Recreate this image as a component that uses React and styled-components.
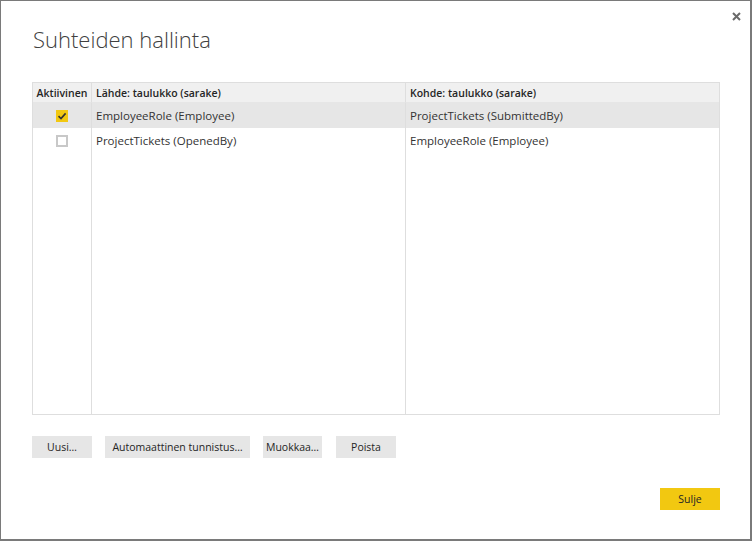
import React from "react";
import styled, { createGlobalStyle } from "styled-components";

const Global = createGlobalStyle`
  html, body { margin: 0; padding: 0; background: #ffffff; }
  body { font-family: "Open Sans", "Noto Sans", sans-serif; color: #333; }
  * { box-sizing: border-box; }
`;

const Dialog = styled.div`
  width: 752px;
  height: 541px;
  background: #fff;
  border-style: solid;
  border-color: #7a7a7a;
  border-width: 1px 2px 2px 1px;
  padding: 0 30px 0 31px;
  display: flex;
  flex-direction: column;
`;

const Header = styled.div`
  display: flex;
  justify-content: space-between;
  align-items: flex-start;
`;

const Title = styled.h1`
  margin: 22px 0 0 1px;
  font-size: 22px;
  font-weight: 300;
  line-height: 32px;
  color: #404040;
`;

const Close = styled.button`
  margin: 10px -21px 0 0;
  width: 10px;
  height: 10px;
  padding: 0;
  border: 0;
  background: none;
  display: flex;
  align-items: center;
  justify-content: center;
  cursor: pointer;
`;

const Table = styled.div`
  margin-top: 27px;
  height: 333px;
  border: 1px solid #dedede;
  display: grid;
  grid-template-columns: 58px 314px 1fr;
  grid-template-rows: 20px 25px 25px 1fr;
`;

const Cell = styled.div`
  display: flex;
  align-items: center;
  justify-content: ${(p) => (p.$center ? "center" : "flex-start")};
  padding: 0 ${(p) => (p.$center ? "0" : "4px")};
  border-left: ${(p) => (p.$first ? "0" : "1px solid #dedede")};
  background: ${(p) => p.$bg || "transparent"};
  font-size: 11.5px;
  color: #333;
  white-space: nowrap;
`;

const HeadCell = styled(Cell)`
  font-weight: 600;
  font-size: 10.5px;
  background: #f0f0f0;
  border-bottom: 1px solid #e6e6e6;
  color: #252525;
`;

const Check = styled.span`
  width: 12px;
  height: 12px;
  display: flex;
  align-items: center;
  justify-content: center;
  background: ${(p) => (p.$checked ? "#f2c811" : "#fff")};
  border: ${(p) => (p.$checked ? "0" : "2px solid #c8c8c8")};
`;

const ButtonRow = styled.div`
  margin-top: 21px;
  display: flex;
  gap: 13px;
`;

const Button = styled.button`
  width: ${(p) => p.$w}px;
  height: 22px;
  padding: 0;
  border: 0;
  background: ${(p) => (p.$primary ? "#f2c811" : "#e6e6e6")};
  font-family: "Open Sans", "Noto Sans", sans-serif;
  font-size: 10.5px;
  color: #252525;
  cursor: pointer;
`;

const Footer = styled.div`
  margin-top: 30px;
  display: flex;
  justify-content: flex-end;
`;

const rows = [
  { active: true, from: "EmployeeRole (Employee)", to: "ProjectTickets (SubmittedBy)" },
  { active: false, from: "ProjectTickets (OpenedBy)", to: "EmployeeRole (Employee)" },
];

export default function App() {
  return (
    <>
      <Global />
      <Dialog>
        <Header>
          <Title>Suhteiden hallinta</Title>
          <Close aria-label="Sulje">
            <svg width="9" height="9" viewBox="0 0 9 9">
              <path d="M1 1 L8 8 M8 1 L1 8" stroke="#6a6a6a" strokeWidth="2" />
            </svg>
          </Close>
        </Header>
        <Table>
          <HeadCell $first $center>Aktiivinen</HeadCell>
          <HeadCell>Lähde: taulukko (sarake)</HeadCell>
          <HeadCell>Kohde: taulukko (sarake)</HeadCell>
          {rows.map((r, i) => {
            const bg = r.active ? "#e6e6e6" : undefined;
            return (
              <React.Fragment key={i}>
                <Cell $first $center $bg={bg}>
                  <Check $checked={r.active}>
                    {r.active && (
                      <svg width="10" height="10" viewBox="0 0 10 10">
                        <path d="M1.5 5.2 L4 7.6 L8.6 2.4" fill="none" stroke="#333" strokeWidth="1.6" />
                      </svg>
                    )}
                  </Check>
                </Cell>
                <Cell $bg={bg}>{r.from}</Cell>
                <Cell $bg={bg}>{r.to}</Cell>
              </React.Fragment>
            );
          })}
          <Cell $first />
          <Cell />
          <Cell />
        </Table>
        <ButtonRow>
          <Button $w={60}>Uusi…</Button>
          <Button $w={145}>Automaattinen tunnistus…</Button>
          <Button $w={59}>Muokkaa…</Button>
          <Button $w={60} style={{ marginLeft: 1 }}>Poista</Button>
        </ButtonRow>
        <Footer>
          <Button $w={60} $primary>Sulje</Button>
        </Footer>
      </Dialog>
    </>
  );
}
